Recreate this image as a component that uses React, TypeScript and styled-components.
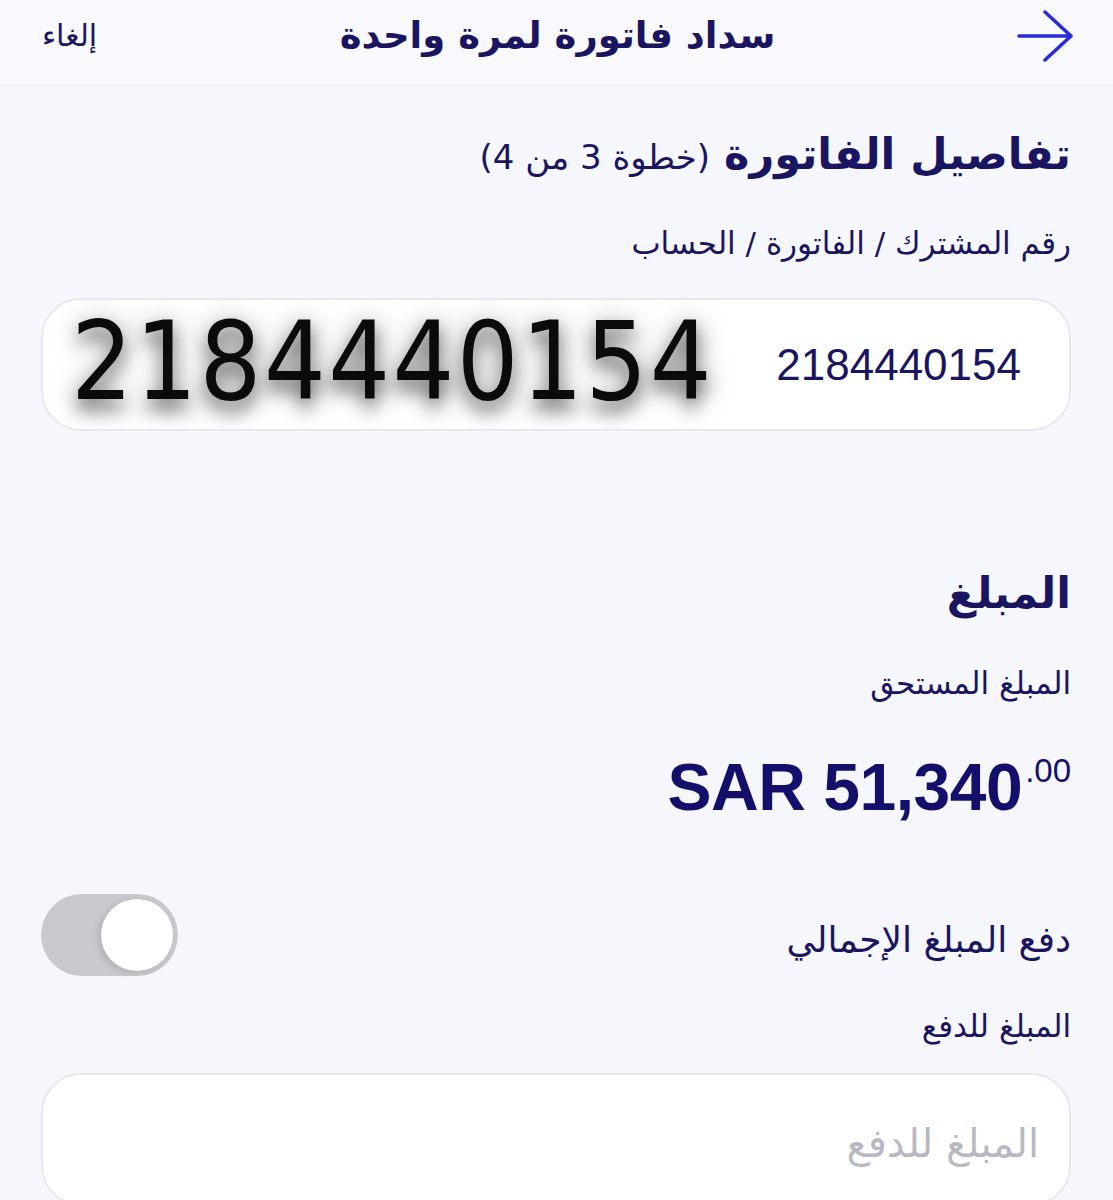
import React from "react";
import styled, { createGlobalStyle } from "styled-components";

const Global = createGlobalStyle`
  html, body { margin: 0; padding: 0; background: #f6f7fc; }
  body { font-family: "DejaVu Sans", "Noto Sans", sans-serif; color: #19145e; }
  * { box-sizing: border-box; }
`;

const Page = styled.div`
  direction: rtl;
  width: 1113px;
  min-height: 1200px;
  background: #f6f7fc;
  overflow: hidden;
`;

const Header = styled.header`
  height: 86px;
  display: grid;
  grid-template-columns: 1fr auto 1fr;
  align-items: center;
  padding: 0 38px 14px 40px;
  background: #f8f8fd;
  border-bottom: 1px solid #eeeff6;
`;

const BackButton = styled.button`
  justify-self: start;
  background: none;
  border: none;
  padding: 0;
  display: flex;
  cursor: pointer;
`;

const Title = styled.h1`
  margin: 0;
  font-size: 37px;
  font-weight: 700;
  color: #1a1560;
`;

const Cancel = styled.span`
  justify-self: end;
  font-size: 30px;
  color: #1a1560;
  padding-left: 2px;
`;

const Content = styled.main`
  padding: 0 42px 0 41px;
  display: flex;
  flex-direction: column;
`;

const SectionTitle = styled.h2<{ $top: number }>`
  margin: ${(p) => p.$top}px 0 0;
  font-size: 43px;
  font-weight: 700;
  line-height: 60px;
  color: #1a1560;
  display: flex;
  align-items: baseline;
  gap: 14px;
`;

const Step = styled.span`
  font-size: 34px;
  font-weight: 400;
`;

const Label = styled.div<{ $top: number; $size?: number }>`
  margin-top: ${(p) => p.$top}px;
  font-size: ${(p) => p.$size ?? 31}px;
  line-height: 40px;
  color: #1a1560;
`;

const Field = styled.div<{ $top: number }>`
  margin-top: ${(p) => p.$top}px;
  height: 133px;
  border-radius: 40px;
  background: #ffffff;
  border: 2px solid #e9e8ef;
  display: flex;
  align-items: center;
  justify-content: space-between;
  padding: 0 48px 0 28px;
  overflow: hidden;
`;

const FieldValue = styled.span`
  font-family: "Liberation Sans", Arial, sans-serif;
  font-size: 44px;
  color: #1a1560;
  direction: ltr;
`;

const Watermark = styled.span`
  direction: ltr;
  font-family: "DejaVu Sans Condensed", "DejaVu Sans", sans-serif;
  font-size: 108px;
  line-height: 1;
  letter-spacing: 2.5px;
  color: #0b0b0b;
  margin-top: -6px;
  text-shadow: 0 10px 18px rgba(0, 0, 0, 0.55), 0 4px 30px rgba(0, 0, 0, 0.35);
`;

const Amount = styled.div`
  margin-top: 48px;
  direction: ltr;
  align-self: flex-start;
  display: flex;
  align-items: flex-start;
  font-family: "Liberation Sans", Arial, sans-serif;
  font-weight: 700;
  color: #130f6b;
`;

const AmountMain = styled.span`
  font-size: 66px;
  line-height: 72px;
  letter-spacing: -0.5px;
`;

const AmountCents = styled.span`
  font-size: 33px;
  font-weight: 400;
  line-height: 36px;
  margin-left: 3px;
  margin-top: 2px;
`;

const ToggleRow = styled.div`
  margin-top: 71px;
  display: flex;
  align-items: center;
  justify-content: space-between;
`;

const ToggleText = styled.span`
  font-size: 36px;
  color: #1a1560;
  padding-top: 8px;
`;

const Toggle = styled.div`
  width: 137px;
  height: 82px;
  border-radius: 41px;
  background: #c9c9cd;
  display: flex;
  align-items: center;
  justify-content: flex-start;
  padding: 0 5px;
`;

const Thumb = styled.div`
  width: 72px;
  height: 72px;
  border-radius: 50%;
  background: #ffffff;
  box-shadow: -3px 2px 6px rgba(0, 0, 0, 0.12);
`;

const Placeholder = styled.span`
  font-size: 40px;
  color: #b9b8c2;
  padding-top: 6px;
  margin-right: -18px;
`;

export default function App() {
  return (
    <Page>
      <Global />
      <Header>
        <BackButton aria-label="رجوع">
          <svg width="58" height="52" viewBox="0 0 58 52" fill="none">
            <path
              d="M2 26 H54 M28 2 L54 26 L28 50"
              stroke="#2a2ad6"
              strokeWidth="3.5"
              strokeLinecap="round"
              strokeLinejoin="round"
            />
          </svg>
        </BackButton>
        <Title>سداد فاتورة لمرة واحدة</Title>
        <Cancel>إلغاء</Cancel>
      </Header>
      <Content>
        <SectionTitle $top={38}>
          تفاصيل الفاتورة <Step>(خطوة 3 من 4)</Step>
        </SectionTitle>
        <Label $top={36}>رقم المشترك / الفاتورة / الحساب</Label>
        <Field $top={35}>
          <FieldValue>2184440154</FieldValue>
          <Watermark>2184440154</Watermark>
        </Field>
        <SectionTitle $top={132}>المبلغ</SectionTitle>
        <Label $top={40}>المبلغ المستحق</Label>
        <Amount>
          <AmountMain>SAR 51,340</AmountMain>
          <AmountCents>.00</AmountCents>
        </Amount>
        <ToggleRow>
          <ToggleText>دفع المبلغ الإجمالي</ToggleText>
          <Toggle>
            <Thumb />
          </Toggle>
        </ToggleRow>
        <Label $top={30}>المبلغ للدفع</Label>
        <Field $top={27}>
          <Placeholder>المبلغ للدفع</Placeholder>
        </Field>
      </Content>
    </Page>
  );
}
